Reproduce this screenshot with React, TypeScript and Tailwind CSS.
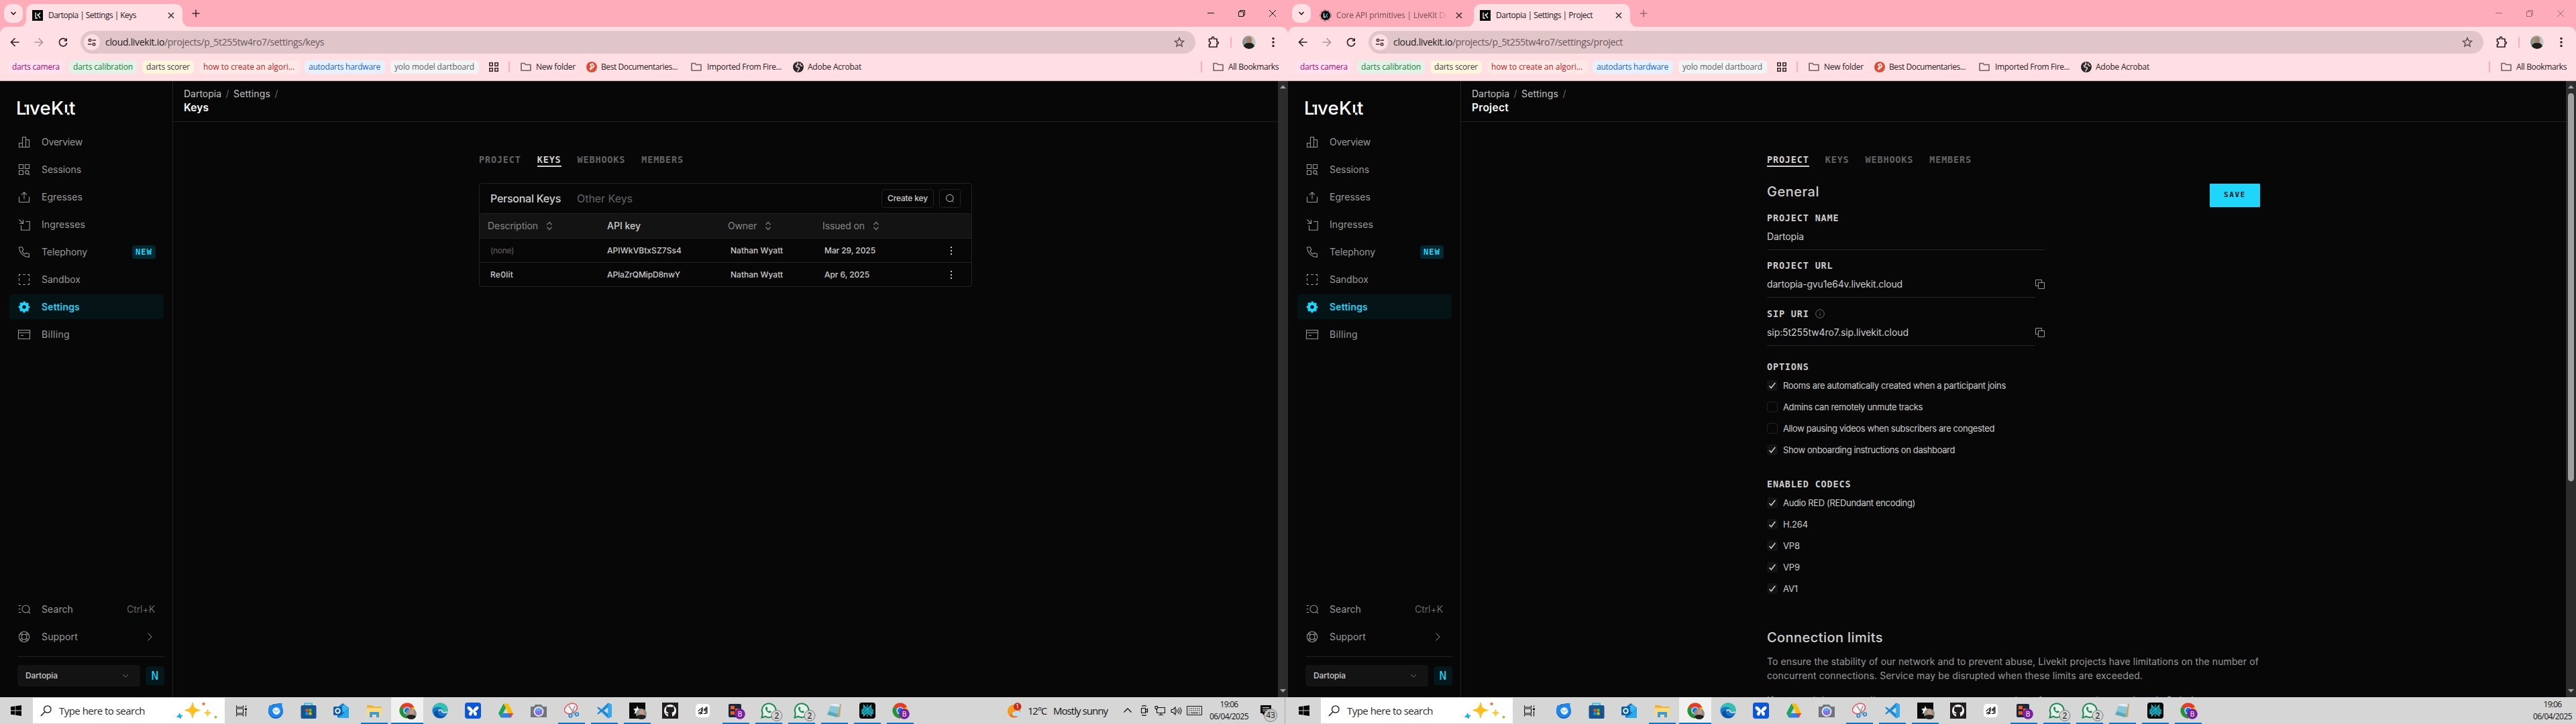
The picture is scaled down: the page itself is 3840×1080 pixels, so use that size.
import { useLayoutEffect, useRef, type ReactNode } from "react";

/* Text set to an exact advance width by spreading letter spacing. */
function Fit({ w, children, className = "" }: { w: number; children: string; className?: string }) {
  const ref = useRef<HTMLSpanElement>(null);
  useLayoutEffect(() => {
    const el = ref.current;
    if (!el) return;
    el.style.letterSpacing = "0px";
    const natural = el.getBoundingClientRect().width;
    el.style.letterSpacing = `${(w - natural) / children.length}px`;
  }, [w, children]);
  return (
    <span ref={ref} className={`inline-block whitespace-pre ${className}`}>
      {children}
    </span>
  );
}

const Svg = ({ s = 16, vb = "0 0 16 16", children, className = "" }: { s?: number; vb?: string; children: ReactNode; className?: string }) => (
  <svg width={s} height={s} viewBox={vb} fill="none" className={`shrink-0 ${className}`}>
    {children}
  </svg>
);

/* ---------- browser chrome ---------- */

const Favicon = () => (
  <Svg>
    <rect width="16" height="16" fill="#050505" />
    <path d="M5 3.500v8.500h3M12 4l-3 4 3 4" stroke="#fff" strokeWidth="1.300" />
    <path d="M8 5.500v3" stroke="#fff" strokeWidth="1.200" />
  </Svg>
);
const DocsIcon = () => (
  <Svg s={18} vb="0 0 18 18">
    <circle cx="9" cy="9" r="8.300" stroke="#7d5b61" strokeWidth="1" strokeDasharray="4 2" />
    <circle cx="9" cy="9" r="7" fill="#0b0b0b" />
    <path d="M6.500 5.500v6h3" stroke="#fff" strokeWidth="1.300" />
    <path d="M12 6l-2 3 2 3" stroke="#1fd5f9" strokeWidth="1.300" />
  </Svg>
);
const CloseX = () => (
  <Svg s={10} vb="0 0 10 10">
    <path d="M1 1l8 8M9 1l-8 8" stroke="#3a2e30" strokeWidth="1.500" />
  </Svg>
);

function Tab({ icon, title, w, active }: { icon: ReactNode; title: string; w: number; active?: boolean }) {
  return (
    <div className={`relative flex h-[34px] w-[233px] shrink-0 items-center pl-[9px] pr-[12px] ${active ? "rounded-t-[10px] bg-[#ffdee4] text-[#241c1d]" : "text-[#6e5055]"}`}>
      {active && (
        <>
          <span className="absolute -left-2.5 bottom-0 size-2.5 bg-[radial-gradient(circle_at_0_0,transparent_9.500px,#ffdee4_10px)]" />
          <span className="absolute -right-2.5 bottom-0 size-2.5 bg-[radial-gradient(circle_at_100%_0,transparent_9.500px,#ffdee4_10px)]" />
        </>
      )}
      <span className="flex w-4 shrink-0 justify-center">{icon}</span>
      <span className={`ml-2 min-w-0 flex-1 overflow-hidden text-xs leading-[18px] ${active ? "" : "mr-3 [mask-image:linear-gradient(90deg,#000_88%,transparent)]"}`}>
        <Fit w={w}>{title}</Fit>
      </span>
      <CloseX />
    </div>
  );
}

const Folder = () => (
  <Svg s={18} vb="0 0 18 18">
    <path d="M2 14.300V3.500h5l1.800 2H16v8.800z" stroke="#6b6163" strokeWidth="1.600" strokeLinejoin="round" />
  </Svg>
);

const chips = [
  { t: "darts camera", w: 71, c: "w-[83px] bg-[#fee3ef] text-[#b80672] mr-2" },
  { t: "darts calibration", w: 89, c: "w-[101px] bg-[#e3f1e7] text-[#188038] mr-2" },
  { t: "darts scorer", w: 65, c: "w-[77px] bg-[#fef6dc] text-[#3c4043] mr-2" },
  { t: "how to create an algori...", w: 136, c: "w-[150px] bg-[#fce8e6] text-[#c5221f] mr-[7px]" },
  { t: "autodarts hardware", w: 107, c: "w-[120px] bg-[#e8f0fe] text-[#1967d2] mr-2" },
  { t: "yolo model dartboard", w: 119, c: "w-[132px] bg-[#f1f3f4] text-[#5f6368]" },
];

function Bookmarks() {
  return (
    <div className="flex h-10 items-center pl-3 pr-[14px] text-xs text-[#2a2223]">
      {chips.map((c) => (
        <span key={c.t} className={`flex h-5 shrink-0 items-center rounded-[6px] pl-1.5 ${c.c}`}>
          <Fit w={c.w}>{c.t}</Fit>
        </span>
      ))}
      <Svg s={16} className="ml-[14px]">
        <path d="M1.800 1.800h4.400v4.400H1.800zM9.800 1.800h4.400v4.400H9.800zM1.800 9.800h4.400v4.400H1.800zM9.800 9.800h4.400v4.400H9.800z" stroke="#332a2b" strokeWidth="1.600" />
      </Svg>
      <span className="ml-[14px] h-4 w-0.5 bg-[#ffacba]" />
      <span className="ml-[15px] flex w-[99px] items-center gap-1.5">
        <Folder />
        <Fit w={59}>New folder</Fit>
      </span>
      <span className="flex w-[155px] items-center gap-1.5">
        <Svg>
          <circle cx="8" cy="8" r="8" fill="#de4b32" />
          <path d="M6 12.500V9.500l3-2-3-2V4.500L9 3l2.500 3.500-2 3M6 9.500l3 1.500" stroke="#fff" strokeWidth="1.500" />
        </Svg>
        <Fit w={114}>Best Documentaries...</Fit>
      </span>
      <span className="flex w-[153px] items-center gap-[7px]">
        <Folder />
        <Fit w={111}>Imported From Fire...</Fit>
      </span>
      <span className="flex items-center gap-1.5">
        <Svg>
          <circle cx="8" cy="8" r="8" fill="#27292b" />
          <path d="M6 1.500c3 1 2 3 0 3.500s-2 3 1 3.200 3 2 1.500 3.300-1 2-1.500 3M11 2.500c-1 2 0 3.500 3 4" stroke="#ffdee4" strokeWidth="1.600" />
        </Svg>
        <Fit w={80}>Adobe Acrobat</Fit>
      </span>
      <span className="ml-auto h-4 w-0.5 bg-[#ffacba]" />
      <span className="ml-[15px] flex items-center gap-1.5">
        <Folder />
        <Fit w={75}>All Bookmarks</Fit>
      </span>
    </div>
  );
}

function Chrome({ path, pathW, second }: { path: string; pathW: number; second?: boolean }) {
  return (
    <header className="h-[121px] border-b border-[#cfb3b8] bg-[#ffacba] font-['Open_Sans',sans-serif]">
      <div className="flex h-10 items-start pl-1.5 pt-1.5">
        <span className="mr-[5px] flex h-7 w-7 items-center justify-center rounded-[10px] bg-[#ffdee4]">
          <Svg s={10} vb="0 0 10 10">
            <path d="M1.500 3l3.500 3.500L8.500 3" stroke="#241c1d" strokeWidth="1.700" />
          </Svg>
        </span>
        {second && (
          <div className="mr-[5px]">
            <Tab icon={<DocsIcon />} title="Core API primitives | LiveKit Docs" w={180} />
          </div>
        )}
        <Tab icon={<Favicon />} title={second ? "Dartopia | Settings | Project" : "Dartopia | Settings | Keys"} w={second ? 144 : 131} active />
        <Svg s={12} vb="0 0 12 12" className="ml-3.5 mt-2">
          <path d="M6 .5v11M.5 6h11" stroke={second ? "#9c6a73" : "#3a2e30"} strokeWidth="1.600" />
        </Svg>
        <span className={`ml-auto flex items-center pt-[9px] ${second ? "text-[#9c6a73]" : "text-black"}`}>
          <Svg s={10} vb="0 0 10 10" className="mr-9">
            <path d="M0 4.500h10" stroke="currentColor" />
          </Svg>
          <Svg s={10} vb="0 0 10 10" className="mr-9">
            <path d="M.5 2.500h7v7h-7zM2.500 2.500v-2h7v7h-2" stroke="currentColor" />
          </Svg>
          <Svg s={10} vb="0 0 10 10" className="mr-[18px]">
            <path d="M0 0l10 10M10 0L0 10" stroke="currentColor" />
          </Svg>
        </span>
      </div>
      <div className="h-20 rounded-t-[10px] bg-[#ffdee4]">
        <div className="flex h-10 items-center pl-1 pt-1.5">
          <span className="flex w-9 justify-center">
            <Svg><path d="M8.500 2L2.500 8l6 6M2.800 8H14.500" stroke="#2b2224" strokeWidth="1.700" /></Svg>
          </span>
          <span className="flex w-9 justify-center">
            <Svg><path d="M7.500 2l6 6-6 6M13.200 8H1.500" stroke="#a8979a" strokeWidth="1.700" /></Svg>
          </span>
          <span className="mr-2 flex w-9 justify-center">
            <Svg>
              <path d="M13 5.200A5.700 5.700 0 1 0 13.700 9" stroke="#2b2224" strokeWidth="1.700" />
              <path d="M14 1.500v5H9z" fill="#2b2224" />
            </Svg>
          </span>
          <div className="flex h-[34px] w-[1662px] items-center rounded-full bg-[#e0c5c9] pl-[5px] pr-4 text-sm">
            <span className="mr-2 flex size-6 items-center justify-center rounded-full bg-[#ffdee4]">
              <Svg s={14} vb="0 0 14 14">
                <path d="M7.500 4h5.500M1 10h5.500" stroke="#3a2e30" strokeWidth="1.500" />
                <circle cx="4" cy="4" r="1.800" stroke="#3a2e30" strokeWidth="1.400" />
                <circle cx="10" cy="10" r="1.800" stroke="#3a2e30" strokeWidth="1.400" />
              </Svg>
            </span>
            <Fit w={88} className="text-[#241c1d]">cloud.livekit.io</Fit>
            <Fit w={pathW} className="text-[#6b595c]">{path}</Fit>
            <Svg className="ml-auto">
              <path d="M8 1.500l1.900 4.400 4.700.4-3.600 3.100 1.100 4.700L8 11.600l-4.100 2.500L5 9.400 1.400 6.300l4.700-.4z" stroke="#5c4d50" strokeWidth="1.400" />
            </Svg>
          </div>
          <Svg s={18} vb="0 0 18 18" className="ml-[18px]">
            <path d="M2.500 4h4V2.500a1.500 1.500 0 0 1 3 0V4h4.500v4.500h1a1.300 1.300 0 0 1 0 2.700h-1V16H2.500v-4c2.600 0 2.600-4 0-4z" stroke="#2b2224" strokeWidth="1.700" strokeLinejoin="round" />
          </Svg>
          <span className="ml-4 h-4 w-0.5 bg-[#ffacba]" />
          <span className="relative ml-4 size-5 overflow-hidden rounded-full bg-[linear-gradient(90deg,#7f8a84,#c9d3cf)]">
            <span className="absolute left-[6px] top-[2px] h-[10px] w-2 rounded-full bg-[#a87f6c]" />
            <span className="absolute left-[2px] top-[11px] h-3 w-4 rounded-t-[6px] bg-[#20201f]" />
          </span>
          <Svg className="ml-[18px]">
            <path d="M6.500 1h3v3h-3zM6.500 6.500h3v3h-3zM6.500 12h3v3h-3z" fill="#2b2224" />
          </Svg>
        </div>
        <Bookmarks />
      </div>
    </header>
  );
}

/* ---------- LiveKit dashboard ---------- */

const OverviewIcon = () => <path d="M.5 15.500v-6h5v6zM5.500 15.500V.5h5v15zM10.500 15.500v-11h5v11z" />;
const SessionsIcon = () => <><path d="M.5.5h6v6h-6zM9.500.5h6v6h-6zM.5 9.500h6v6h-6z" /><circle cx="12.300" cy="12" r="2.600" /><path d="M14 14l2 2" /></>;
const EgressIcon = () => <path d="M.5 7.500v8h15v-8M8 11V.8M4 4.600L8 .8l4 3.800" />;
const IngressIcon = () => <path d="M10 3.500h6.200v12.800H3.500V9M.5.5l6 6M6.500 1v5.500H1" />;
const PhoneIcon = () => <path d="M.6.7h4.600l1.600 4.200-2 1.700c1 2.200 2.300 3.600 4.500 4.600l1.900-2 4.200 1.600v4.600C7.600 15.400.6 9.500.6.7z" />;
const SandboxIcon = () => <path d="M.5 3V.5H3M6 .5h4M13 .5h2.500V3M15.500 6v4M15.500 13v2.500H13M10 15.500H6M3 15.500H.5V13M.5 10V6" />;
const SettingsIcon = () => (
  <>
    <circle cx="8" cy="8" r="4.900" strokeWidth="4.200" />
    <circle cx="8" cy="8" r="7.400" strokeWidth="2" strokeDasharray="3 2.810" strokeDashoffset="1.500" />
  </>
);
const BillingIcon = () => <><path d="M-.5 1.500h17v13h-17zM-.5 5.300h17" /><path d="M3 9.300h4" /></>;
const SearchIcon = () => <><path d="M-.5 2.500h4M-.5 7.500h3M-.5 12.500h4" /><circle cx="10.500" cy="7.500" r="5.500" /><path d="M14.300 11.500l2.500 2.500" /></>;
const SupportIcon = () => <><circle cx="8" cy="8" r="7.700" /><circle cx="8" cy="8" r="3.800" /><path d="M3.300 1.900l2.900 2.800M1.900 3.300l2.800 2.900M12.700 1.900L9.800 4.700M14.100 3.300l-2.800 2.900M3.300 14.100l2.900-2.800M1.900 12.700l2.800-2.900M12.700 14.100l-2.900-2.800M14.100 12.700l-2.800-2.900" /></>;

const NavIcon = ({ children }: { children: ReactNode }) => (
  <svg width="16" height="16" viewBox="0 0 16 16" fill="none" stroke="currentColor" strokeWidth="1.100" className="shrink-0 overflow-visible">
    {children}
  </svg>
);

const nav = [
  { t: "Overview", w: 61, i: <OverviewIcon /> },
  { t: "Sessions", w: 59, i: <SessionsIcon /> },
  { t: "Egresses", w: 61, i: <EgressIcon /> },
  { t: "Ingresses", w: 65, i: <IngressIcon /> },
  { t: "Telephony", w: 68, i: <PhoneIcon />, badge: true },
  { t: "Sandbox", w: 58, i: <SandboxIcon /> },
  { t: "Settings", w: 57, i: <SettingsIcon />, active: true },
  { t: "Billing", w: 42, i: <BillingIcon /> },
];

/* Wordmark whose i-dots are replaced by small offset squares. */
function Logo() {
  return (
    <div className="relative ml-[24px] mt-[24px] flex h-8 text-[27.500px] font-medium leading-8 text-white">
      <Fit w={14}>L</Fit>
      <Fit w={6}>i</Fit>
      <Fit w={32}>ve</Fit>
      <Fit w={19}>K</Fit>
      <Fit w={8}>i</Fit>
      <Fit w={10}>t</Fit>
      <svg width="92" height="32" viewBox="0 0 92 32" className="absolute left-0 top-0">
        <path d="M14 3h6v7.500h-6zM71 3h7.500v7.500H71zM71 23h7.500v4H71z" fill="#070707" />
        <path d="M12.500 11h3v3.300h-3zM76 23h3.500v3.300H76z" fill="#fff" />
      </svg>
    </div>
  );
}

function Sidebar() {
  return (
    <aside className="flex w-[258px] shrink-0 flex-col border-r border-[#222] text-sm text-[#999]">
      <Logo />
      <nav className="ml-[14px] mt-4 flex w-[230px] flex-col gap-1">
        {nav.map((n) => (
          <div key={n.t} className={`flex h-[37px] items-center rounded pl-[14px] pr-3 ${n.active ? "bg-[#031316] font-semibold text-[#1fd5f9]" : ""}`}>
            <NavIcon>{n.i}</NavIcon>
            <span className="ml-[18px]"><Fit w={n.w}>{n.t}</Fit></span>
            {n.badge && (
              <span className="ml-auto flex h-5 w-[35px] items-center justify-center rounded bg-[#022932] font-['DejaVu_Sans_Mono',monospace] text-xs font-bold text-[#1fd5f9]">
                <Fit w={25}>NEW</Fit>
              </span>
            )}
          </div>
        ))}
      </nav>
      <div className="ml-[14px] mt-auto flex w-[230px] flex-col gap-1">
        <div className="flex h-[37px] items-center pl-[14px] pr-[13px]">
          <NavIcon><SearchIcon /></NavIcon>
          <span className="ml-[18px]"><Fit w={47}>Search</Fit></span>
          <span className="ml-auto text-[#666]"><Fit w={42}>Ctrl+K</Fit></span>
        </div>
        <div className="flex h-[37px] items-center pl-[14px] pr-[15px]">
          <NavIcon><SupportIcon /></NavIcon>
          <span className="ml-[18px]"><Fit w={54}>Support</Fit></span>
          <Svg s={12} vb="0 0 12 12" className="ml-auto"><path d="M3.500.5L9 6l-5.500 5.500" stroke="#999" /></Svg>
        </div>
      </div>
      <div className="ml-[26px] mt-[11px] flex h-[61px] w-[219px] items-start justify-between border-t border-[#222] pt-3">
        <div className="flex h-8 w-[183px] items-center justify-between rounded bg-[#131313] pl-3 pr-4 text-xs font-medium text-[#ccc]">
          <Fit w={48}>Dartopia</Fit>
          <Svg s={12} vb="0 0 12 12"><path d="M2 4l4 4 4-4" stroke="#777" /></Svg>
        </div>
        <div className="mt-0.5 flex size-7 items-center justify-center rounded bg-[#04181c] font-['DejaVu_Sans_Mono',monospace] text-lg text-[#1fd5f9]">N</div>
      </div>
    </aside>
  );
}

const tabs = ["PROJECT", "KEYS", "WEBHOOKS", "MEMBERS"];

const Mono = ({ children, className = "" }: { children: string; className?: string }) => (
  <span className={`whitespace-pre font-['DejaVu_Sans_Mono',monospace] text-[13.500px] font-bold tracking-[0.830px] ${className}`}>{children}</span>
);

function SettingsTabs({ current }: { current: string }) {
  return (
    <div className="mt-[47px] flex gap-6">
      {tabs.map((t) => (
        <div key={t} className={`flex h-5 items-center border-b-2 pb-px leading-4 ${t === current ? "border-[#d0d0d0] text-[#d0d0d0]" : "border-transparent text-[#646464]"}`}>
          <Mono>{t}</Mono>
        </div>
      ))}
    </div>
  );
}

const Sort = () => (
  <Svg s={14} vb="0 0 12 12" className="ml-[10px]">
    <path d="M3 4.500L6 1.200l3 3.300M3 7.500l3 3.300 3-3.300" stroke="#858585" />
  </Svg>
);

const rows = [
  { d: "(none)", dw: 35, k: "APIWkVBtxSZ7Ss4", kw: 111, o: "Nathan Wyatt", i: "Mar 29, 2025", iw: 76, c: "text-[#555]" },
  { d: "Re0lit", dw: 34, k: "APIaZrQMipD8nwY", kw: 109, o: "Nathan Wyatt", i: "Apr 6, 2025", iw: 67, c: "" },
];

function KeysPage() {
  return (
    <div className="w-[735px]">
      <SettingsTabs current="KEYS" />
      <section className="mt-6 overflow-hidden rounded border border-[#222] text-[#ccc]">
        <div className="flex h-11 items-center pl-4 pr-4 text-base">
          <Fit w={105} className="font-medium text-[#cfcfcf]">Personal Keys</Fit>
          <span className="ml-6 text-[#646464]"><Fit w={83}>Other Keys</Fit></span>
          <button className="ml-auto flex h-7 w-[78px] items-center justify-center rounded border border-[#222] text-xs font-medium">
            <Fit w={60}>Create key</Fit>
          </button>
          <button className="ml-2 flex h-7 w-8 items-center justify-center rounded border border-[#222]">
            <Svg s={14} vb="0 0 14 14">
              <circle cx="6.800" cy="6.500" r="5.200" stroke="#ccc" />
              <path d="M10.300 10.200l2.400 2.400" stroke="#ccc" />
            </Svg>
          </button>
        </div>
        <div className="grid h-[38px] grid-cols-[190px_180px_141px_1fr] items-center rounded-t border-y border-[#222] bg-[#131313] text-sm text-[#888]">
          <span className="flex items-center pl-3"><Fit w={75}>Description</Fit><Sort /></span>
          <span className="text-[#ccc]"><Fit w={50} className="font-medium">API key</Fit></span>
          <span className="flex items-center"><Fit w={43}>Owner</Fit><Sort /></span>
          <span className="flex items-center"><Fit w={63}>Issued on</Fit><Sort /></span>
        </div>
        {rows.map((r) => (
          <div key={r.k} className="grid h-9 grid-cols-[190px_184px_140px_1fr_31px] items-center border-b border-[#222] text-xs font-medium leading-4 last:h-[35px] last:border-0">
            <span className={`pl-4 ${r.c}`}><Fit w={r.dw}>{r.d}</Fit></span>
            <Fit w={r.kw} className="justify-self-start">{r.k}</Fit>
            <Fit w={78} className="justify-self-start">{r.o}</Fit>
            <Fit w={r.iw} className="justify-self-start">{r.i}</Fit>
            <svg width="2" height="12" viewBox="0 0 2 12">
              <path d="M0 1h2M0 6h2M0 11h2" stroke="#ccc" strokeWidth="2" />
            </svg>
          </div>
        ))}
      </section>
    </div>
  );
}

const CopyIcon = () => (
  <Svg s={14} vb="0 0 14 14" className="mt-[3px]">
    <path d="M4.500 9.500h-4v-9h9v4M4.500 4.500h9v9h-9z" stroke="#999" />
  </Svg>
);

function Field({ label, value, w, copy, info, gap }: { label: string; value: string; w: number; copy?: boolean; info?: boolean; gap: string }) {
  return (
    <div className={gap}>
      <div className="flex h-5 items-center text-[#ccc]">
        <Mono>{label}</Mono>
        {info && (
          <Svg s={14} vb="0 0 14 14" className="ml-[9px]">
            <circle cx="7" cy="7" r="6.300" stroke="#666" />
            <path d="M7 6.300v4M7 3.800v1.200" stroke="#666" />
          </Svg>
        )}
      </div>
      <div className="mt-2 flex w-[414px] text-sm leading-5 text-[#ccc]">
        <div className="h-[30px] flex-1 border-b border-[#262626]"><Fit w={w}>{value}</Fit></div>
        {copy && <CopyIcon />}
      </div>
    </div>
  );
}

function Check({ label, w, on = true }: { label: string; w: number; on?: boolean }) {
  return (
    <label className="flex h-8 items-center text-[13px] leading-5 text-[#ccc]">
      <span className={`mr-2 flex size-4 items-center justify-center rounded-sm ${on ? "bg-[#131313]" : "border border-[#222]"}`}>
        {on && (
          <Svg s={12} vb="0 0 12 12"><path d="M1.500 6.800l2.800 3L10.300 2" stroke="#d0d0d0" strokeWidth="1.500" /></Svg>
        )}
      </span>
      <Fit w={w}>{label}</Fit>
    </label>
  );
}

function ProjectPage() {
  return (
    <div className="w-[735px]">
      <SettingsTabs current="PROJECT" />
      <div className="mt-[25px] flex h-[35px] items-start justify-between">
        <h2 className="text-xl font-medium leading-6 text-[#cfcfcf]"><Fit w={78}>General</Fit></h2>
        <button className="h-[35px] w-[75px] rounded-[1px] bg-[#1fd5f9] font-['DejaVu_Sans_Mono',monospace] text-[11px] font-bold text-[#06181c]"><Fit w={33}>SAVE</Fit></button>
      </div>
      <Field gap="mt-1.5" label="PROJECT NAME" value="Dartopia" w={55} />
      <Field gap="mt-[13px]" label="PROJECT URL" value="dartopia-gvu1e64v.livekit.cloud" w={202} copy />
      <Field gap="mt-3.5" label="SIP URI" value="sip:5t255tw4ro7.sip.livekit.cloud" w={211} copy info />
      <div className="mb-0.5 mt-[21px] flex h-5 items-center text-[#ccc]"><Mono>OPTIONS</Mono></div>
      <Check label="Rooms are automatically created when a participant joins" w={332} />
      <Check label="Admins can remotely unmute tracks" w={208} on={false} />
      <Check label="Allow pausing videos when subscribers are congested" w={315} on={false} />
      <Check label="Show onboarding instructions on dashboard" w={256} />
      <div className="mb-0.5 mt-[25px] flex h-5 items-center text-[#ccc]"><Mono>ENABLED CODECS</Mono></div>
      <Check label="Audio RED (REDundant encoding)" w={197} />
      <Check label="H.264" w={37} />
      <Check label="VP8" w={25} />
      <Check label="VP9" w={25} />
      <Check label="AV1" w={22} />
      <h2 className="mt-[45px] text-xl font-medium leading-6 text-[#cfcfcf]"><Fit w={173}>Connection limits</Fit></h2>
      <p className="mt-[13px] text-sm leading-[21px] text-[#999]">
        <Fit w={733}>To ensure the stability of our network and to prevent abuse, Livekit projects have limitations on the number of</Fit>
        <Fit w={560}>concurrent connections. Service may be disrupted when these limits are exceeded.</Fit>
      </p>
      <p className="mt-4 whitespace-nowrap text-sm leading-[21px] text-[#999]">
        <Fit w={527}>If you anticipate needing more concurrent connections for your project, </Fit>
        <Fit w={120} className="text-[#1fd5f9]">update to the Scale plan</Fit>
      </p>
    </div>
  );
}

function Scrollbar({ thumb }: { thumb?: boolean }) {
  return (
    <div className="flex w-[15px] shrink-0 flex-col items-center bg-[#2c2c2c]">
      <svg width="9" height="5" viewBox="0 0 9 5" className="mt-1.5 shrink-0"><path d="M0 5h9L4.500 0z" fill="#9f9f9f" /></svg>
      {thumb && <span className="mt-[7px] h-[579px] w-[9px] rounded-full bg-[#9f9f9f]" />}
      <svg width="9" height="5" viewBox="0 0 9 5" className="mb-[7px] mt-auto shrink-0"><path d="M0 0h9L4.500 5z" fill="#9f9f9f" /></svg>
    </div>
  );
}

function Dashboard({ title, titleW, children, thumb }: { title: string; titleW: number; children: ReactNode; thumb?: boolean }) {
  return (
    <div className="flex h-[919px] overflow-hidden bg-[#070707] font-['Inter',sans-serif]">
      <Sidebar />
      <main className="flex h-full flex-1 flex-col overflow-hidden">
        <div className="h-[61px] shrink-0 border-b border-[#222] pl-4 pt-2 text-sm leading-5 text-[#c2c2c2]">
          <div className="flex h-[21px] items-center">
            <Fit w={56}>Dartopia</Fit>
            <span className="w-[18px] text-center text-[#646464]">/</span>
            <Fit w={55}>Settings</Fit>
            <span className="w-[18px] text-center text-[#646464]">/</span>
          </div>
          <Fit w={titleW} className="text-[15.500px] font-semibold leading-[21px] text-white">{title}</Fit>
        </div>
        <div className="pl-[456px]">{children}</div>
      </main>
      <Scrollbar thumb={thumb} />
    </div>
  );
}

/* ---------- taskbar ---------- */

const Ico = ({ children }: { children: ReactNode }) => <Svg s={24} vb="0 0 24 24" className="overflow-visible">{children}</Svg>;

const ChromeLogo = () => (
  <>
    <circle cx="12" cy="12" r="11.500" fill="#fbc116" />
    <path d="M12 12L2.040 6.250A11.500 11.500 0 0 1 21.960 6.250z" fill="#e33b2e" />
    <path d="M2.040 6.250A11.500 11.500 0 0 0 12 23.500L17 14.500 12 12z" fill="#229342" />
    <circle cx="12" cy="12" r="5.600" fill="#fff" />
    <circle cx="12" cy="12" r="4.400" fill="#1a73e8" />
  </>
);
const BBadge = () => (
  <>
    <circle cx="18" cy="17" r="7.800" fill="#7b1fa2" />
    <text x="18" y="20.500" fontSize="10" textAnchor="middle" fill="#fff">B</text>
  </>
);
const Face = () => (
  <>
    <circle cx="18" cy="17" r="8" fill="#8d8f8b" />
    <ellipse cx="18.500" cy="14.500" rx="3.300" ry="4.500" fill="#c49a86" />
    <path d="M10.700 20.500c4-3.500 10-3.500 14.500 0A8 8 0 0 1 18 25a8 8 0 0 1-7.300-4.500z" fill="#222" />
  </>
);
const Whatsapp = () => (
  <>
    <path d="M1.500 22.500l1.400-6.200A10.300 10.300 0 1 1 7 20.700z" fill="#e6efe9" stroke="#1a8a50" strokeWidth="2" />
    <path d="M8 6.500c-3 2 1.500 9.500 6.500 9l1.500-2-2.500-1.500-1.300 1.200C10.500 12.300 9.700 11 9.500 10l1-1-1-2.500z" fill="#1a8a50" />
    <circle cx="24" cy="19.500" r="8" fill="#d2d2d2" stroke="#777" />
    <text x="24" y="24" fontSize="12" textAnchor="middle" fill="#000">2</text>
  </>
);

type App = { k: string; icon: ReactNode; open?: boolean; active?: boolean };
const apps: App[] = [
  { k: "mail", icon: <><circle cx="12" cy="13" r="11" fill="#1565c8" /><path d="M9 4c5-4 10-3 13-3-1 2-1 4 0 6 3 9-3 15-10 15S1 17 1 11c0-3 1-6 3-8 0 3 2 3 5 1z" fill="#1f87ea" /><path d="M7 11c2-4 7-5 10-2l1.500 3c0 3.500-2.500 6-5.500 6s-5-2.500-6-7z" fill="#e8f3fd" /><path d="M8 10l5 4 4-4" stroke="#8fc2f0" strokeWidth="1.500" /></> },
  { k: "store", icon: <><path d="M6 5V1.500h11V5" stroke="#35c3f2" strokeWidth="2" /><rect x=".5" y="4" width="23" height="20" rx="2.500" fill="#17538f" /><path d="M7.500 9.500h4v4h-4z" fill="#f25022" /><path d="M12.500 9.500h4v4h-4z" fill="#7fba00" /><path d="M7.500 14.500h4v4h-4z" fill="#00a4ef" /><path d="M12.500 14.500h4v4h-4z" fill="#ffb900" /></> },
  { k: "outlook", icon: <><path d="M5 8l9-7 9 7v14H6z" fill="#1173c7" /><path d="M9 8l7-5 7 6-7 6z" fill="#35b8f1" /><path d="M6 23l17-13v13z" fill="#28a8ea" /><rect x="0" y="6" width="13" height="13" rx="1.500" fill="#0f5ea8" /><circle cx="6.500" cy="12.500" r="3.300" stroke="#fff" strokeWidth="1.800" /></> },
  { k: "files", open: true, icon: <><path d="M1 4h8l2 2h12v14H1z" fill="#f0b43a" /><path d="M1 8h22v12H1z" fill="#fcd97a" /><path d="M5 22v-8h14v8h-4v-4H9v4z" fill="#3a9be0" /></> },
  { k: "chrome", open: true, active: true, icon: <><ChromeLogo /><Face /></> },
  { k: "edge", icon: <><circle cx="12" cy="12" r="11.500" fill="#1479cc" /><path d="M1 10C2 4 7 .5 12 .5c6 0 11.500 4 11.500 9.500 0 3-3 5-6 5-2 0-3-1-2-2.500 1-3-2-6-6-6-3.500 0-7 1-8.500 3.500z" fill="#35c1b1" /><path d="M9 12c-2 5 3 10 11 8-6 5-15 3.500-17-4C5 12 7 11 9 12z" fill="#0c4f9e" /><path d="M10 13c0-2 2.500-3 4.500-1.500-.5 3 3 4.500 9 2.500" stroke="#d6d6d6" strokeWidth="2" /></> },
  { k: "fly", icon: <><rect width="24" height="24" rx="4" fill="#0b57d8" /><path d="M12 12C9 5 4 5 3.500 7c0 3 3 5.500 5.500 6-3 1-4 5-1.500 6.500S12 15 12 12zm0 0c3-7 8-7 8.500-5 0 3-3 5.500-5.500 6 3 1 4 5 1.500 6.500S12 15 12 12z" fill="#fff" /></> },
  { k: "drive", icon: <><path d="M8.500 1.500h7L23 16h-7.500z" fill="#fbbc04" /><path d="M8.500 1.500L12 8 4.500 22.500 1 16z" fill="#1ea362" /><path d="M8 16h15l-3.500 6.500h-15z" fill="#2f7de9" /><path d="M16.500 16H23l-3.500 6.500z" fill="#ea4335" /></> },
  { k: "camera", icon: <><path d="M7 3h9l2 3h6v16H0V6h5z" fill="#6f757b" /><circle cx="12" cy="13.500" r="7.500" fill="#e6e8ea" /><circle cx="12" cy="13.500" r="5.500" fill="#8a6fe0" /><path d="M8 13a4 4 0 0 1 8-1z" fill="#55b3f3" /></> },
  { k: "snip", open: true, icon: <><ellipse cx="11" cy="9" rx="10" ry="7" transform="rotate(-25 11 9)" stroke="#e5525a" strokeWidth="1.500" fill="#fbeff0" /><path d="M8 5l9 13M17 5l-5 13" stroke="#8b9096" strokeWidth="1.500" /><circle cx="10.500" cy="19.500" r="2.300" stroke="#2a8ad8" strokeWidth="1.800" /><circle cx="20" cy="17.500" r="2.300" stroke="#2a8ad8" strokeWidth="1.800" /></> },
  { k: "code", open: true, icon: <><path d="M17.500.5L7.500 10 3 6.500 1 7.500 5.500 12 1 16.500l2 1L7.500 14l10 9.500 5.500-2.500V3zM17.500 7v10L11 12z" fill="#1f8ad6" /><path d="M17.500.5v23l5.500-2.500V3z" fill="#33a9f2" /></> },
  { k: "spark", open: true, icon: <><rect width="24" height="24" fill="#0a0a0a" /><path d="M12 5l1.500 4 4.500 1-3.500 3 .5 5-3.500-3-4 2 1.500-4.500L6 9.500l4.500-.5z" fill="#fff" /><Face /></> },
  { k: "hub", icon: <><rect width="24" height="24" fill="#211f1f" /><path d="M12 3a9.300 9.300 0 0 0-3 18v-3.500c-3 .6-3.200-2-4.300-2.300 1.600-.5 2.500 1.700 4.300 1.100.1-.7.400-1 .7-1.300C7 14.500 5.500 13 5.700 10.500c0-1 .3-1.700.9-2.300-.2-.8-.2-1.700.1-2.500 1 0 1.800.500 2.500 1a9 9 0 0 1 5.600 0c.7-.5 1.500-1 2.500-1 .3.800.3 1.700.1 2.500.6.600.9 1.300.9 2.300.2 2.500-1.300 4-4 4.500.5.500.7 1 .7 2V21A9.300 9.300 0 0 0 12 3z" fill="#fff" /></> },
  { k: "script", icon: <><rect x="1" y="2" width="21" height="20" rx="5" fill="#fff" /><path d="M4.500 13c2-1 3-4 5-4s0 4-1 4M5.500 17c0-2 3-3 3.500-2s-1 2.500-2 2M11 7v5l-1.500 4.500h2M13 10c2.500-1 3-1 2 1l-2 1.500M13 16.500h3l.5-9.500h1.500v9.500" stroke="#111" strokeWidth="1.200" /></> },
  { k: "jet", open: true, icon: <><rect x="1" y="2" width="19" height="20" rx="2" fill="#1c2a3d" /><path d="M4 5h6v5H4zM11 9h6v5h-6zM4 13h6v5H4z" fill="#f1591f" /><BBadge /></> },
  { k: "wa1", open: true, icon: <Whatsapp /> },
  { k: "wa2", open: true, icon: <Whatsapp /> },
  { k: "note", open: true, icon: <><path d="M8 2h14l-2 19-4 1z" fill="#c3a56c" /><path d="M7 1.500l13 1L16 22 1 18z" fill="#8cc7d6" /><path d="M7 1.500l13 1-.8 4-13.500-2z" fill="#e3edf0" /><path d="M4 13l13 4-1 5L1 18z" fill="#5ba9bd" /></> },
  { k: "plex", open: true, icon: <><rect width="24" height="24" rx="4" fill="#060808" /><path d="M12 3v18M6.500 4L12 10l5.500-6v6.500H20v6h-2.500V20L12 14.500 6.500 20v-3.500H4v-6h2.500z" fill="#137f8c" stroke="#20b3c4" strokeWidth="1.300" /><path d="M12 10l-7 6M12 10l7 6" stroke="#20b3c4" strokeWidth="1.300" /></> },
  { k: "chromeB", open: true, icon: <><ChromeLogo /><BBadge /></> },
];

function Sparkles() {
  return (
    <svg width="62" height="26" viewBox="0 0 62 26" className="ml-auto mr-2.5 shrink-0">
      <path d="M24 1c2 8 3.500 9.500 11.500 11.500-8 2-9.500 3.500-11.500 11.500-2-8-3.500-9.500-11.500-11.500C20.500 10.500 22 9 24 1z" fill="#fbbf1d" stroke="#fbbf1d" strokeLinejoin="round" />
      <path d="M46.500 11c1 4 1.500 4.500 5.500 5.500-4 1-4.500 1.500-5.500 5.500-1-4-1.500-4.500-5.500-5.500 4-1 4.500-1.500 5.500-5.500z" fill="#fcc83c" stroke="#fcc83c" />
      <path d="M4.500 17l1.500 3 3 .7-2.600 1.500L6 25l-2.300-2.200-3.200-.5L3.500 20z" fill="#18aef0" stroke="#18aef0" />
      <circle cx="40.500" cy="3" r="2.100" fill="#f4642b" />
      <circle cx="58.500" cy="22.700" r="2" fill="#8bcb3c" />
    </svg>
  );
}

function Clock() {
  return (
    <div className="flex w-[60px] flex-col items-center text-xs leading-[18px]">
      <Fit w={27}>19:06</Fit>
      <Fit w={58}>06/04/2025</Fit>
    </div>
  );
}

function Tray() {
  return (
    <>
      <Svg s={24} vb="0 0 24 26">
        <circle cx="10.500" cy="14" r="10.500" fill="#f59a1b" />
        <path d="M3 21.500A10.500 10.500 0 0 0 18 21l-4-7z" fill="#ee6d17" />
        <path d="M11 22a3.500 3.500 0 0 1 .5-7 5 5 0 0 1 9 1.500c3 .5 3 5.500-.5 5.500z" fill="#bfdcf8" />
        <circle cx="16" cy="6.500" r="6.300" fill="#c42b1c" />
        <text x="16" y="10.200" fontSize="10" textAnchor="middle" fill="#fff">1</text>
      </Svg>
      <span className="ml-[7px] text-[15px]"><Fit w={28}>12°C</Fit></span>
      <span className="ml-2.5 text-[15px]"><Fit w={81}>Mostly sunny</Fit></span>
      <Svg s={14} vb="0 0 14 14" className="ml-[23px]"><path d="M1.500 9.500L7 4l5.500 5.500" stroke="#111" strokeWidth="1.300" /></Svg>
      <Svg s={16} className="ml-[10px]">
        <path d="M3.500 4.500h6v7h-6zM9.500 7l3-1.500v5l-3-1.500M4 1.500c2-1 5-1 7 0M4 14.500c2 1 5 1 7 0" stroke="#111" strokeWidth="1.200" />
      </Svg>
      <Svg s={16} className="ml-[7px]">
        <path d="M5 3.500h10.500v8H3.500V6M1 1.500h3.500V5H1zM2.700 5v2M9.500 11.500v3M6 14.500h7" stroke="#111" strokeWidth="1.100" />
      </Svg>
      <Svg s={17} vb="0 0 17 16" className="ml-2">
        <path d="M1 6h2.500L7 2.500v11L3.500 10H1zM9 5.500c1 1.500 1 3.500 0 5M11.300 4c2 2.500 2 5.500 0 8M13.600 2.500c3 3.500 3 7.500 0 11" stroke="#111" strokeWidth="1.100" />
      </Svg>
      <svg width="23" height="14" viewBox="0 0 23 14" fill="none" className="ml-[7px]">
        <path d="M.5.5h22v13H.5z" stroke="#111" />
        <path d="M3 4h17M3 7h17" stroke="#111" strokeDasharray="1.500 1.500" />
        <path d="M6 10.500h11M3 10.500h1.500M18.500 10.500H20" stroke="#111" />
      </svg>
      <div className="ml-2.5"><Clock /></div>
      <div className="relative ml-[17px] h-[30px] w-9">
        <Svg s={16} className="mt-[7px]"><path d="M0 0h16v12H7l-3.500 3V12H0z" fill="#000" /><path d="M3 3.500h10M3 6h10M3 8.500h6" stroke="#d6d6d6" /></Svg>
        <span className="absolute left-[5px] top-3 flex size-5 items-center justify-center rounded-full border border-[#777] bg-[#cfcfcf]/90 text-xs leading-none">43</span>
      </div>
      <span className="h-full w-[5px] border-l border-[#a5a5a5]" />
    </>
  );
}

function Taskbar({ tray }: { tray?: boolean }) {
  return (
    <footer className="flex h-10 items-center bg-[#d6d6d6] font-['Open_Sans',sans-serif] text-[#151515]">
      <Svg s={16} className="ml-4 mr-[17px]">
        <path d="M0 2.300L6.500 1.400v6.200H0zM7.300 1.300L16 0v7.600H7.300zM0 8.400h6.500v6.200L0 13.700zM7.300 8.400H16V16l-8.700-1.300z" fill="#000" />
      </Svg>
      <div className="flex h-[38px] w-[286px] items-center bg-white pl-[11px] text-[15px] text-[#2b2b2b]">
        <Svg s={17} vb="0 0 17 17" className="mr-[11px]"><circle cx="10.800" cy="6" r="5.200" stroke="#111" strokeWidth="1.300" /><path d="M7 9.800L.8 16" stroke="#111" strokeWidth="1.300" /></Svg>
        <Fit w={128}>Type here to search</Fit>
        <Sparkles />
      </div>
      <Svg s={17} vb="0 0 17 16" className="ml-[17px] mr-[18px]">
        <path d="M.5 0v2.500h10V0M.5 16v-2.500h10V16M.5 4.500h10v7H.5zM14.500 0v2M14.500 8.500V16" stroke="#111" strokeWidth="1.200" />
        <path d="M13 4h3v3h-3z" fill="#111" />
      </Svg>
      <div className="flex h-full gap-px">
        {apps.map((a) => (
          <div key={a.k} className={`flex h-full w-12 flex-col items-center justify-between pt-2 ${a.active ? "bg-[#f0f0f0]" : ""}`}>
            <Ico>{a.icon}</Ico>
            {a.open && <span className={`h-0.5 bg-[#0078d7] ${a.active ? "w-12" : "w-10"}`} />}
          </div>
        ))}
      </div>
      <div className={`ml-auto flex h-full items-center ${tray ? "" : "pr-[5px]"}`}>{tray ? <Tray /> : <Clock />}</div>
    </footer>
  );
}

export default function App() {
  return (
    <div className="grid h-[1080px] w-[3840px] grid-cols-2 overflow-hidden bg-[#070707]">
      <div className="flex flex-col overflow-hidden">
        <Chrome path="/projects/p_5t255tw4ro7/settings/keys" pathW={238} />
        <Dashboard title="Keys" titleW={37}><KeysPage /></Dashboard>
        <Taskbar tray />
      </div>
      <div className="flex flex-col overflow-hidden">
        <Chrome path="/projects/p_5t255tw4ro7/settings/project" pathW={254} second />
        <Dashboard title="Project" titleW={55} thumb><ProjectPage /></Dashboard>
        <Taskbar />
      </div>
    </div>
  );
}
